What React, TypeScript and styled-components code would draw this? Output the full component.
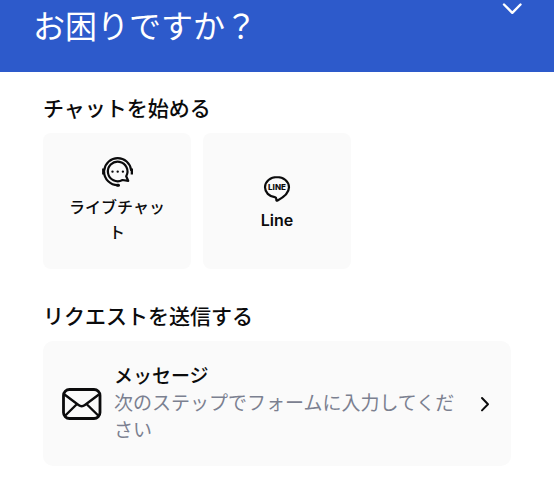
import React from 'react';
import styled, { createGlobalStyle } from 'styled-components';

const GlobalStyle = createGlobalStyle`
  *, *::before, *::after { box-sizing: border-box; }
  body {
    margin: 0;
    background: #ffffff;
    color: #0b0b0c;
    font-family: Inter, "Noto Sans CJK JP", sans-serif;
  }
  button { font: inherit; color: inherit; border: 0; cursor: pointer; }
  svg { display: block; flex: none; }
`;

const Header = styled.header`
  display: flex;
  align-items: flex-start;
  justify-content: space-between;
  padding: 2px 26px 21px 33px;
  background: #2d5acb;
  color: #ffffff;
`;

const Title = styled.h1`
  margin: 0;
  font-size: 32px;
  line-height: 49px;
  font-weight: 400;
`;

const CollapseButton = styled.button`
  padding: 0;
  background: none;
`;

const Main = styled.main`
  display: flex;
  flex-direction: column;
  gap: 32px;
  padding: 21px 43px 34px;
`;

const Section = styled.section`
  display: flex;
  flex-direction: column;
  gap: 8px;
`;

const SectionTitle = styled.h2`
  margin: 0;
  font-size: 21px;
  line-height: 32px;
  font-weight: 500;
`;

const ChannelGrid = styled.div`
  display: grid;
  grid-template-columns: repeat(3, 1fr);
  gap: 12px;
`;

const ChannelCard = styled.button`
  display: flex;
  flex-direction: column;
  align-items: center;
  justify-content: center;
  gap: 6px;
  min-height: 136px;
  padding: 22px;
  border-radius: 8px;
  background: #fafafa;
`;

const ChannelName = styled.span<{ $weight: number }>`
  font-size: 16px;
  line-height: 25px;
  font-weight: ${({ $weight }) => $weight};
  text-align: center;
`;

const RequestCard = styled.button`
  display: flex;
  align-items: center;
  gap: 12px;
  padding: 22px 19px;
  border-radius: 10px;
  background: #fafafa;
  text-align: left;
`;

const RequestText = styled.span`
  display: flex;
  flex: 1;
  flex-direction: column;
  font-size: 19px;
  line-height: 27px;
`;

const RequestTitle = styled.span`
  font-weight: 500;
`;

const RequestHint = styled.span`
  font-weight: 400;
  color: #7b8090;
`;

const ChevronDown = () => (
  <svg width="32" height="24" viewBox="0 0 32 24" fill="none" stroke="currentColor" strokeWidth="2.4" strokeLinecap="round" strokeLinejoin="round">
    <path d="M8 2.500l8.300 8.300 8.200-8.300" />
  </svg>
);

const ChevronRight = () => (
  <svg width="14" height="20" viewBox="0 0 14 20" fill="none" stroke="currentColor" strokeWidth="2" strokeLinecap="round" strokeLinejoin="round">
    <path d="M4 4l6 6.2L4 16.4" />
  </svg>
);

const HeadsetIcon = () => (
  <svg width="32" height="32" viewBox="0 0 32 32" fill="none" stroke="currentColor" strokeWidth="2.2" strokeLinecap="round" strokeLinejoin="round">
    <path d="M3.300 13a13.500 13.500 0 0 1 26.800 0" />
    <path d="M3.100 14.500a13.600 13.600 0 0 0 14 13.700" />
    <path d="M2.400 11.500v6M31 11.500v6" strokeWidth="2.600" strokeLinecap="butt" />
    <path d="M16.500 28.200h1" strokeWidth="3" />
    <path d="M25.200 19.300A9.800 9.800 0 1 0 21.500 23l5.700.8-2-4.500z" />
    <path d="M11.500 14.600h.01M16.700 14.600h.01M21.900 14.600h.01" strokeWidth="2.400" />
  </svg>
);

const LineMark = styled.text`
  font-family: Inter, sans-serif;
  font-size: 8px;
  font-weight: 800;
  fill: currentColor;
  stroke: none;
`;

const LineIcon = () => (
  <svg width="32" height="32" viewBox="0 0 32 32" fill="none" stroke="currentColor" strokeWidth="2.200" strokeLinejoin="round">
    <path d="M16 7C9.400 7 4 11.600 4 17.300c0 5.100 4.100 9.100 9.800 9.900 1.600.3 1.700.9 1.500 2.400-.1 1 .3 1.300 1.300.8C20.500 28.400 28 23.700 28 17.300 28 11.600 22.600 7 16 7z" />
    <LineMark x="16" y="20" textAnchor="middle">LINE</LineMark>
  </svg>
);

const MailIcon = () => (
  <svg width="40" height="32" viewBox="0 0 40 32" fill="none" stroke="currentColor" strokeWidth="2.800" strokeLinejoin="round">
    <rect x="1.500" y="1.500" width="36.500" height="29" rx="6" />
    <path d="M2.500 6.500l14 10.500q3.200 2.400 6.400 0l14-10.500M2.800 28l11.700-11.500M36.700 28L25 16.500" strokeWidth="2.400" />
  </svg>
);

const channels = [
  { name: 'ライブチャット', weight: 500, icon: <HeadsetIcon /> },
  { name: 'Line', weight: 600, icon: <LineIcon /> },
];

export default function App() {
  return (
    <>
      <GlobalStyle />
      <Header>
        <Title>お困りですか？</Title>
        <CollapseButton type="button" aria-label="閉じる">
          <ChevronDown />
        </CollapseButton>
      </Header>
      <Main>
        <Section>
          <SectionTitle>チャットを始める</SectionTitle>
          <ChannelGrid>
            {channels.map(({ name, weight, icon }) => (
              <ChannelCard type="button" key={name}>
                {icon}
                <ChannelName $weight={weight}>{name}</ChannelName>
              </ChannelCard>
            ))}
          </ChannelGrid>
        </Section>
        <Section>
          <SectionTitle>リクエストを送信する</SectionTitle>
          <RequestCard type="button">
            <MailIcon />
            <RequestText>
              <RequestTitle>メッセージ</RequestTitle>
              <RequestHint>次のステップでフォームに入力してください</RequestHint>
            </RequestText>
            <ChevronRight />
          </RequestCard>
        </Section>
      </Main>
    </>
  );
}
